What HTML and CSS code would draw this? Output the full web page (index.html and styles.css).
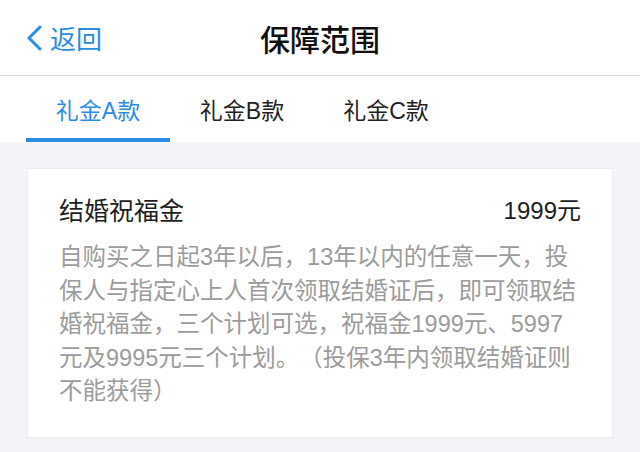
FILE: index.html
```html
<!DOCTYPE html>
<html lang="zh-CN">
<head>
<meta charset="UTF-8">
<meta name="viewport" content="width=device-width, initial-scale=1.0">
<title>保障范围</title>
<link rel="stylesheet" href="styles.css">
</head>
<body>

<div class="nav-bar">
    <a class="nav-back" href="#">
        <svg width="17" height="26" viewBox="0 0 17 26"><path d="M14 2 L3 13 L14 24" fill="none" stroke="#2a8ce2" stroke-width="3" stroke-linecap="round" stroke-linejoin="round"/></svg>
        <span>返回</span>
    </a>
    <h1 class="nav-title">保障范围</h1>
</div>

<div class="tabs">
    <div class="tab active">礼金A款</div>
    <div class="tab">礼金B款</div>
    <div class="tab">礼金C款</div>
</div>

<div class="content">
    <div class="card">
        <div class="card-head">
            <span class="card-title">结婚祝福金</span>
            <span class="card-amount">1999元</span>
        </div>
        <p class="card-desc">自购买之日起3年以后，13年以内的任意一天，投保人与指定心上人首次领取结婚证后，即可领取结婚祝福金，三个计划可选，祝福金1999元、5997元及9995元三个计划。（投保3年内领取结婚证则不能获得）</p>
    </div>
</div>

</body>
</html>
```

FILE: styles.css
```css
body {
    font-family: "Liberation Sans", "Noto Sans CJK SC", sans-serif;
    margin: 0;
    padding: 0;
    background-color: #f4f4f8;
    color: #1e1e1e;
}
.nav-bar {
    height: 75px;
    background-color: #fff;
    border-bottom: 1px solid #dedede;
    display: flex;
    align-items: center;
    justify-content: center;
    position: relative;
}
.nav-back {
    position: absolute;
    left: 26px;
    top: 0;
    height: 75px;
    display: flex;
    align-items: center;
    gap: 7px;
    color: #2a8ce2;
    text-decoration: none;
    font-size: 26px;
}
.nav-title {
    margin: 0;
    font-size: 30px;
    font-weight: 500;
    color: #111;
}
.tabs {
    display: flex;
    padding-left: 26px;
    background-color: #fff;
    height: 66px;
}
.tab {
    width: 144px;
    display: flex;
    align-items: center;
    justify-content: center;
    font-size: 23px;
    color: #222;
    box-sizing: border-box;
    border-bottom: 4px solid transparent;
    padding-top: 4px;
}
.tab.active {
    color: #2a8ce2;
    border-bottom-color: #2a8ce2;
}
.content {
    padding: 26px 27px 0;
}
.card {
    background-color: #fff;
    padding: 25px 31px 28px;
    border: 1px solid #ececf0;
}
.card-head {
    display: flex;
    justify-content: space-between;
    align-items: center;
    line-height: 34px;
    margin-bottom: 13px;
}
.card-title {
    font-size: 25px;
}
.card-amount {
    font-size: 24px;
}
.card-desc {
    margin: 0;
    font-size: 23.5px;
    line-height: 33.5px;
    color: #9c9c9c;
    text-spacing-trim: space-all;
}
```
